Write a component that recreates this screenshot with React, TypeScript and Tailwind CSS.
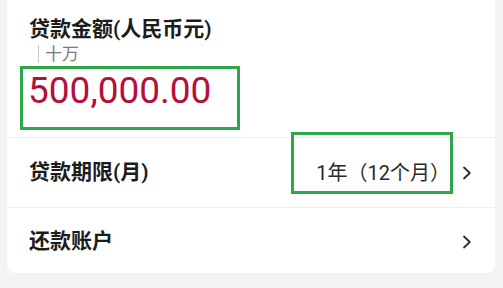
import React from 'react';

function Chevron() {
  return (
    <svg width="10" height="14" viewBox="0 0 10 14" fill="none" className="shrink-0">
      <path d="M2 1.5 L7.8 7 L2 12.5" stroke="#2b2b2b" strokeWidth="1.8" strokeLinecap="round" strokeLinejoin="round" />
    </svg>
  );
}

export default function App() {
  const font = { fontFamily: 'Roboto, "Noto Sans CJK SC", sans-serif' };

  return (
    <div className="w-[503px] h-[288px] bg-[#f3f3f3] pl-[7px] pr-[8px] overflow-hidden" style={font}>
      <div className="bg-white rounded-b-lg h-[273px] flex flex-col">
        {/* 贷款金额 */}
        <div className="h-[137px] flex flex-col pt-[15px] pl-[22px]">
          <div className="text-[21px] leading-[28px] font-semibold text-[#1c1c1c]">贷款金额(人民币元)</div>
          <div className="mt-[2px] h-[18px] flex items-center pl-[9px]">
            <span className="w-px h-[18px] bg-[#c8c8c8]" />
            <span className="ml-[6px] text-[17px] leading-[18px] text-[#7a7a7a]">十万</span>
          </div>
          <div className="mt-[3px] -ml-[9px] w-[220px] h-[64px] border-[3px] border-[#2ea64a] pl-[5px] pt-[4px]">
            <span className="block text-[37px] leading-[36px] text-[#b3113b]">500,000.00</span>
          </div>
        </div>
        <div className="h-px bg-[#efefef]" />

        {/* 贷款期限 */}
        <div className="relative h-[69px] flex items-center pl-[22px] pr-[23px]">
          <span className="text-[21px] font-semibold text-[#1c1c1c]">贷款期限(月)</span>
          <span className="ml-auto text-[20px] text-[#2a2a2a]">1年（12个月）</span>
          <span className="ml-[12px]"><Chevron /></span>
          <div className="absolute left-[284px] top-[-6px] w-[162px] h-[62px] border-[3px] border-[#2ea64a]" />
        </div>
        <div className="h-px bg-[#efefef]" />

        {/* 还款账户 */}
        <div className="flex-1 flex items-center pl-[22px] pr-[23px] pt-[3px]">
          <span className="text-[21px] font-semibold text-[#1c1c1c]">还款账户</span>
          <span className="ml-auto"><Chevron /></span>
        </div>
      </div>
    </div>
  );
}
